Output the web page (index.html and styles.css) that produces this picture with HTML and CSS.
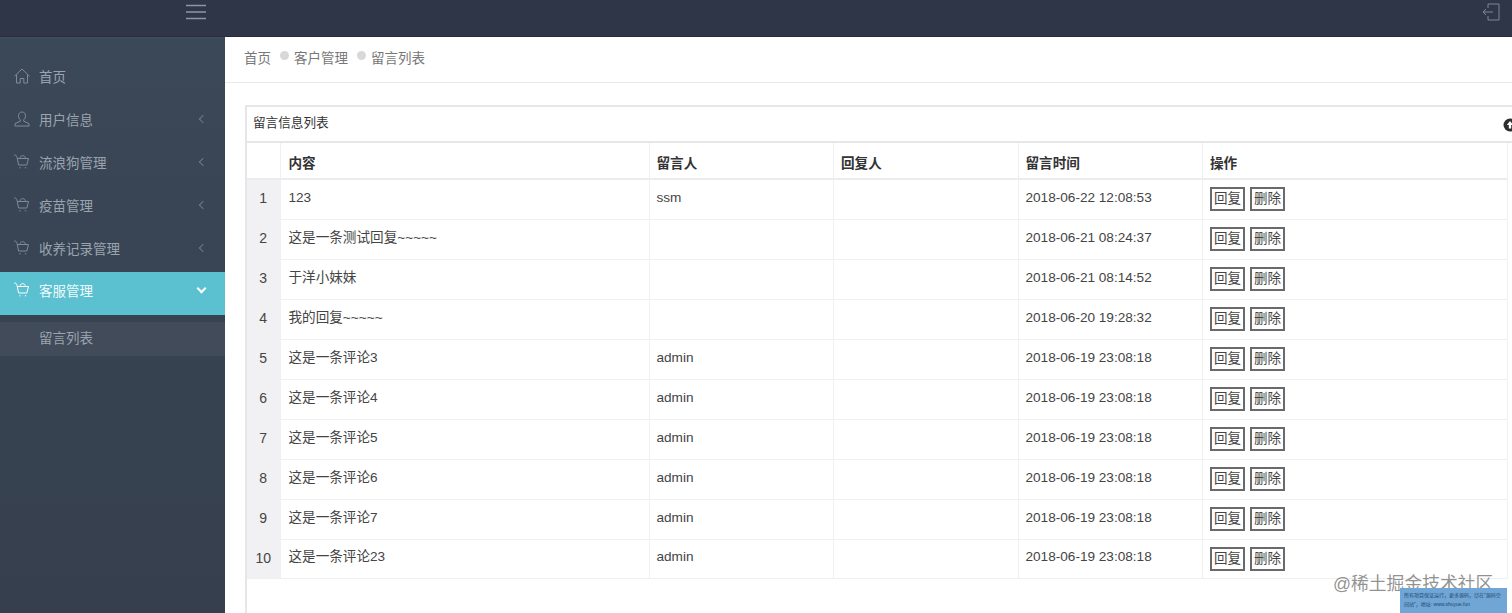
FILE: index.html
```html
<!DOCTYPE html>
<html lang="zh-CN">
<head>
  <meta charset="UTF-8" />
  <meta name="viewport" content="width=device-width, initial-scale=1.0" />
  <title>留言列表</title>
  <link rel="stylesheet" href="styles.css">
</head>
<body>

  <header class="topbar">
    <div class="topbar-left">
      <svg class="menu-icon" width="22" height="16" viewBox="0 0 22 16"><path d="M1 1.500h20M1 8h20M1 14.500h20" /></svg>
    </div>
    <svg class="logout-icon" width="20" height="18" viewBox="0 0 20 18"><path d="M7 5V1h11v16H7v-4M12 9H2M5 6L2 9l3 3" /></svg>
  </header>

  <div class="layout">
    <nav class="sidebar">
      <a class="nav-item" href="#">
        <svg class="nav-icon" viewBox="0 0 16 16"><path d="M.5 8.200L8 1l7.500 7.200M2.500 6.500V15h3.700v-4.500h3.600V15h3.700V6.500" /></svg>
        <span>首页</span>
      </a>
      <a class="nav-item" href="#">
        <svg class="nav-icon" viewBox="0 0 16 16"><path d="M8 1C5.800 1 4.500 2.500 4.500 4.800c0 1.700.8 3.200 1.800 4v1.400L1 12.600V15h14v-2.400l-5.300-2.400V8.800c1-.8 1.800-2.300 1.800-4C11.500 2.500 10.200 1 8 1z" /></svg>
        <span>用户信息</span>
        <i class="chevron"></i>
      </a>
      <a class="nav-item" href="#">
        <svg class="nav-icon" viewBox="0 0 16 16"><path class="cart" d="M.3 1C2 1 2.500 1.600 3 3.200L4.600 11h8.200l1.700-6.500H3.400M6 4.500c0-1.700 1-2.800 2.700-2.800s2.700 1.100 2.700 2.800M5.300 13.800h1.400M10.800 13.800h1.400" /></svg>
        <span>流浪狗管理</span>
        <i class="chevron"></i>
      </a>
      <a class="nav-item" href="#">
        <svg class="nav-icon" viewBox="0 0 16 16"><path class="cart" d="M.3 1C2 1 2.500 1.600 3 3.200L4.600 11h8.200l1.700-6.500H3.400M6 4.500c0-1.700 1-2.800 2.700-2.800s2.700 1.100 2.700 2.800M5.300 13.800h1.400M10.800 13.800h1.400" /></svg>
        <span>疫苗管理</span>
        <i class="chevron"></i>
      </a>
      <a class="nav-item" href="#">
        <svg class="nav-icon" viewBox="0 0 16 16"><path class="cart" d="M.3 1C2 1 2.500 1.600 3 3.200L4.600 11h8.200l1.700-6.500H3.400M6 4.500c0-1.700 1-2.800 2.700-2.800s2.700 1.100 2.700 2.800M5.300 13.800h1.400M10.800 13.800h1.400" /></svg>
        <span>收养记录管理</span>
        <i class="chevron"></i>
      </a>
      <a class="nav-item active" href="#">
        <svg class="nav-icon" viewBox="0 0 16 16"><path class="cart" d="M.3 1C2 1 2.500 1.600 3 3.200L4.600 11h8.200l1.700-6.500H3.400M6 4.500c0-1.700 1-2.800 2.700-2.800s2.700 1.100 2.700 2.800M5.300 13.800h1.400M10.800 13.800h1.400" /></svg>
        <span>客服管理</span>
        <i class="chevron down"></i>
      </a>
      <a class="nav-sub" href="#">留言列表</a>
    </nav>

    <main class="main">
      <div class="crumbs">
        <span>首页</span><i class="dot"></i><span>客户管理</span><i class="dot"></i><span>留言列表</span>
      </div>

      <section class="panel">
        <div class="panel-title">
          <span>留言信息列表</span>
          <svg class="collapse-icon" width="14" height="14" viewBox="0 0 14 14"><circle cx="7" cy="7" r="6.500" /><path class="arrow" d="M7 3L3.800 7h2v3.500h2.400V7h2z" /></svg>
        </div>
        <table class="msg-table">
          <colgroup>
            <col class="c-no"><col class="c-text"><col class="c-user"><col class="c-user"><col class="c-user"><col class="c-ops">
          </colgroup>
          <thead>
            <tr><th></th><th>内容</th><th>留言人</th><th>回复人</th><th>留言时间</th><th>操作</th></tr>
          </thead>
          <tbody>
            <tr><td class="no">1</td><td>123</td><td>ssm</td><td></td><td>2018-06-22 12:08:53</td><td class="ops"><button>回复</button><button>删除</button></td></tr>
            <tr><td class="no">2</td><td>这是一条测试回复~~~~~</td><td></td><td></td><td>2018-06-21 08:24:37</td><td class="ops"><button>回复</button><button>删除</button></td></tr>
            <tr><td class="no">3</td><td>于洋小妹妹</td><td></td><td></td><td>2018-06-21 08:14:52</td><td class="ops"><button>回复</button><button>删除</button></td></tr>
            <tr><td class="no">4</td><td>我的回复~~~~~</td><td></td><td></td><td>2018-06-20 19:28:32</td><td class="ops"><button>回复</button><button>删除</button></td></tr>
            <tr><td class="no">5</td><td>这是一条评论3</td><td>admin</td><td></td><td>2018-06-19 23:08:18</td><td class="ops"><button>回复</button><button>删除</button></td></tr>
            <tr><td class="no">6</td><td>这是一条评论4</td><td>admin</td><td></td><td>2018-06-19 23:08:18</td><td class="ops"><button>回复</button><button>删除</button></td></tr>
            <tr><td class="no">7</td><td>这是一条评论5</td><td>admin</td><td></td><td>2018-06-19 23:08:18</td><td class="ops"><button>回复</button><button>删除</button></td></tr>
            <tr><td class="no">8</td><td>这是一条评论6</td><td>admin</td><td></td><td>2018-06-19 23:08:18</td><td class="ops"><button>回复</button><button>删除</button></td></tr>
            <tr><td class="no">9</td><td>这是一条评论7</td><td>admin</td><td></td><td>2018-06-19 23:08:18</td><td class="ops"><button>回复</button><button>删除</button></td></tr>
            <tr><td class="no">10</td><td>这是一条评论23</td><td>admin</td><td></td><td>2018-06-19 23:08:18</td><td class="ops"><button>回复</button><button>删除</button></td></tr>
          </tbody>
        </table>
      </section>
    </main>
  </div>

  <div class="watermark">@稀土掘金技术社区</div>
  <div class="promo">所有项目保证运行，更多源码，尽在"源码空间站"，地址: www.shuyue.fun</div>

</body>
</html>
```

FILE: styles.css
```css
html, body {
  height: 100%;
}

body {
  margin: 0;
  overflow: hidden;
  background: #fff;
  color: #333;
  font-family: "Liberation Sans", "Noto Sans CJK SC", sans-serif;
  font-size: 13.6px;
}

.topbar {
  height: 37px;
  box-sizing: border-box;
  background: #2f3647;
  border-bottom: 1px solid #262c39;
  display: flex;
  justify-content: space-between;
}

.topbar-left {
  width: 225px;
  box-sizing: border-box;
  padding: 4px 18px 0 0;
  display: flex;
  justify-content: flex-end;
  align-items: flex-start;
}

.menu-icon path {
  fill: none;
  stroke: #8e95a3;
  stroke-width: 1.3;
}

.logout-icon {
  margin: 3px 11px 0 0;
}

.logout-icon path {
  fill: none;
  stroke: #7f8797;
  stroke-width: 1;
}

.layout {
  display: flex;
  height: 576px;
}

.sidebar {
  width: 225px;
  flex: none;
  box-sizing: border-box;
  padding-top: 16px;
  background: linear-gradient(180deg, #3b4858 0, #384352 50%, #353f4e 100%);
  border-top: 1px solid #414e5e;
}

.nav-item {
  height: 43px;
  box-sizing: border-box;
  padding: 0 19px 0 14px;
  display: flex;
  align-items: center;
  color: #9aa4af;
  font-size: 13.5px;
  text-decoration: none;
}

.nav-item span {
  margin-left: 9px;
  flex: 1;
}

.nav-icon {
  width: 16px;
  height: 16px;
  fill: none;
  stroke: #808b97;
  stroke-width: 1;
}

.chevron {
  width: 5px;
  height: 5px;
  border-left: 1px solid #6f7a86;
  border-bottom: 1px solid #6f7a86;
  transform: rotate(45deg);
}

.nav-item.active {
  margin-top: 3px;
  padding-bottom: 8px;
  background: #5bc0cf;
  color: #eefafc;
}

.nav-item.active .nav-icon {
  stroke: #fff;
}

.chevron.down {
  width: 5px;
  height: 5px;
  margin: -2px 1px 0 0;
  border-color: #fff;
  border-width: 2px;
  transform: rotate(-45deg);
}

.nav-sub {
  display: block;
  height: 34px;
  margin-top: 7px;
  padding-left: 39px;
  line-height: 34px;
  background: #414b59;
  color: #9aa4af;
  font-size: 13.5px;
  text-decoration: none;
}

.main {
  flex: 1;
  min-width: 0;
  overflow: hidden;
}

.crumbs {
  height: 46px;
  box-sizing: border-box;
  padding: 0 19px 5px;
  display: flex;
  align-items: center;
  gap: 5px;
  border-bottom: 1px solid #eaeaea;
  color: #777;
  font-size: 13.5px;
}

.dot {
  width: 9px;
  height: 9px;
  margin: -4px 0 0 4px;
  border-radius: 50%;
  background: #d8d8d8;
}

.panel {
  width: 1300px;
  min-height: 600px;
  margin: 22px 0 0 20px;
  border: 2px solid #e6e6e6;
  border-right: none;
  border-bottom: none;
}

.panel-title {
  height: 36px;
  box-sizing: border-box;
  padding: 0 35px 5px 6px;
  display: flex;
  align-items: center;
  justify-content: space-between;
  border-bottom: 2px solid #e6e6e6;
  font-size: 12.6px;
}

.collapse-icon circle {
  fill: #2e2e2e;
}

.collapse-icon .arrow {
  fill: #fff;
}

.collapse-icon {
  flex: none;
  margin: 7px -5px 0 0;
}

.msg-table {
  width: 1261px;
  table-layout: fixed;
  border-collapse: collapse;
}

.c-no { width: 33px; }
.c-text { width: 369px; }
.c-user { width: 184.500px; }
.c-ops { width: 305px; }

.msg-table th,
.msg-table td {
  padding: 0 7px;
  text-align: left;
  line-height: 20px;
  border: 1px solid #f0f0f0;
  border-top: none;
}

.msg-table th:nth-child(2),
.msg-table td:nth-child(2) {
  padding-left: 8px;
}

.msg-table th {
  height: 29px;
  padding-top: 6px;
  font-weight: bold;
  color: #333;
  border-bottom: 2px solid #ececec;
}

.msg-table td {
  height: 40px;
  padding-bottom: 3px;
  box-sizing: border-box;
  color: #444;
}

.msg-table tbody tr:last-child td {
  height: 39px;
}

.msg-table td.no {
  padding: 0 0 2px;
  text-align: center;
  background: #f1f1f4;
  font-size: 14px;
}

.msg-table th:first-child,
.msg-table td:first-child {
  border-left: none;
}

.ops button {
  height: 24px;
  width: 35px;
  padding: 0;
  margin: 3px 5px 0 0;
  background: #fff;
  border: 2px solid #6a6a6a;
  color: #444;
  font: inherit;
  font-size: 13.5px;
  vertical-align: middle;
}

.watermark {
  position: absolute;
  left: 1333px;
  top: 572px;
  color: rgba(110, 110, 110, 0.75);
  font-size: 17.800px;
  line-height: 24px;
  white-space: nowrap;
}

.promo {
  position: absolute;
  left: 1400px;
  top: 588px;
  width: 107px;
  height: 25px;
  box-sizing: border-box;
  padding: 3px 4px;
  background: #6fa6d6;
  color: #26456a;
  font-size: 5px;
  line-height: 9px;
  overflow: hidden;
}
```
